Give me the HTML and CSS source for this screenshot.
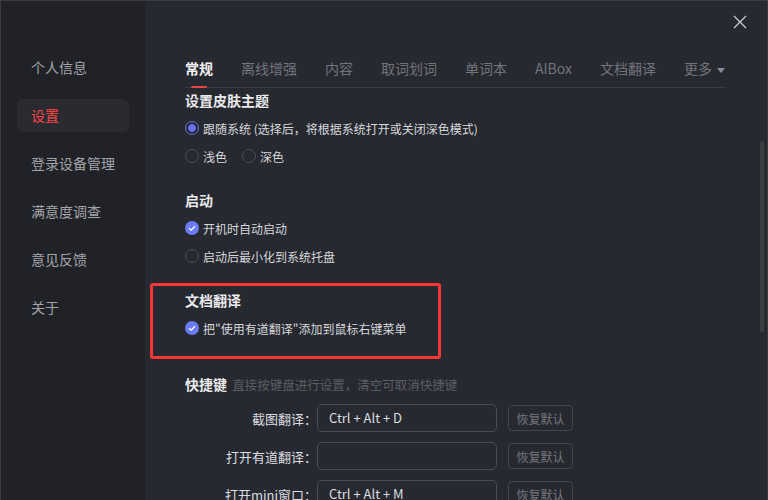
FILE: index.html
```html
<!DOCTYPE html>
<html lang="zh-CN">
<head>
    <meta charset="UTF-8">
    <meta name="viewport" content="width=device-width, initial-scale=1.0">
    <title>设置</title>
    <link rel="stylesheet" href="styles.css">
</head>
<body>
    <div class="window">
        <div class="sidebar">
            <div class="nav-item">个人信息</div>
            <div class="nav-item active">设置</div>
            <div class="nav-item">登录设备管理</div>
            <div class="nav-item">满意度调查</div>
            <div class="nav-item">意见反馈</div>
            <div class="nav-item">关于</div>
        </div>

        <div class="main">
            <button class="close" aria-label="关闭">
                <svg width="14" height="14" viewBox="0 0 14 14"><path d="M1 1L13 13M13 1L1 13" stroke="#c9cbd2" stroke-width="1.3" fill="none"/></svg>
            </button>

            <div class="tabs">
                <span class="tab active">常规</span>
                <span class="tab">离线增强</span>
                <span class="tab">内容</span>
                <span class="tab">取词划词</span>
                <span class="tab">单词本</span>
                <span class="tab">AIBox</span>
                <span class="tab">文档翻译</span>
                <span class="tab more">更多 <i class="caret"></i></span>
            </div>

            <div class="content">
                <div class="section">
                    <div class="section-title">设置皮肤主题</div>
                    <div class="option">
                        <span class="radio checked"></span>跟随系统 (选择后，将根据系统打开或关闭深色模式)
                    </div>
                    <div class="option">
                        <span class="radio"></span>浅色
                        <span class="radio spaced"></span>深色
                    </div>
                </div>

                <div class="section">
                    <div class="section-title">启动</div>
                    <div class="option">
                        <span class="check on"><svg width="14" height="14" viewBox="0 0 14 14"><path d="M4 7.2L6.2 9.2L10 5.2" stroke="#fff" stroke-width="1.3" fill="none"/></svg></span>开机时自动启动
                    </div>
                    <div class="option">
                        <span class="check"></span>启动后最小化到系统托盘
                    </div>
                </div>

                <div class="section marked">
                    <div class="section-title">文档翻译</div>
                    <div class="option">
                        <span class="check on"><svg width="14" height="14" viewBox="0 0 14 14"><path d="M4 7.2L6.2 9.2L10 5.2" stroke="#fff" stroke-width="1.3" fill="none"/></svg></span>把"使用有道翻译"添加到鼠标右键菜单
                    </div>
                </div>

                <div class="section">
                    <div class="section-title">快捷键 <span class="hint">直接按键盘进行设置，清空可取消快捷键</span></div>
                    <div class="hotkey">
                        <label>截图翻译：</label>
                        <div class="key-input">Ctrl + Alt + D</div>
                        <button class="reset">恢复默认</button>
                    </div>
                    <div class="hotkey">
                        <label>打开有道翻译：</label>
                        <div class="key-input"></div>
                        <button class="reset">恢复默认</button>
                    </div>
                    <div class="hotkey">
                        <label>打开mini窗口：</label>
                        <div class="key-input">Ctrl + Alt + M</div>
                        <button class="reset">恢复默认</button>
                    </div>
                </div>
            </div>

            <div class="scrollbar"></div>
        </div>
    </div>
</body>
</html>
```

FILE: styles.css
```css
* {
    box-sizing: border-box;
}
body {
    margin: 0;
    font-family: "Noto Sans CJK SC", "Noto Sans", sans-serif;
    background-color: #272930;
    overflow: hidden;
}
.window {
    width: 768px;
    height: 500px;
    display: flex;
    border: 1px solid #3b3c41;
    border-bottom: none;
    overflow: hidden;
}

/* left nav */
.sidebar {
    width: 144px;
    flex-shrink: 0;
    background-color: #212227;
    padding: 50px 0 0 16px;
}
.nav-item {
    width: 112px;
    height: 33px;
    line-height: 33px;
    padding-left: 14px;
    margin-bottom: 15px;
    font-size: 14px;
    color: #a3a5ab;
    border-radius: 6px;
}
.nav-item.active {
    background-color: #2a2b31;
    color: #ff4747;
}

/* right side */
.main {
    flex: 1;
    position: relative;
    background-color: #272930;
    padding: 0 41px 0 40px;
}
.close {
    position: absolute;
    top: 14px;
    right: 20px;
    padding: 0;
    border: none;
    background: none;
    width: 14px;
    height: 14px;
}
.tabs {
    display: flex;
    gap: 28px;
    margin-top: 57px;
    padding-bottom: 8px;
    border-bottom: 1px solid #3a3c43;
}
.tab {
    position: relative;
    font-size: 14px;
    line-height: 21px;
    color: #72747c;
    white-space: nowrap;
}
.tab.active {
    color: #f2f2f4;
    font-weight: bold;
}
.tab.active::after {
    content: "";
    position: absolute;
    left: 6px;
    bottom: -9px;
    width: 16px;
    height: 2px;
    background-color: #e2463f;
    border-radius: 1px;
}
.caret {
    display: inline-block;
    margin-left: 2px;
    vertical-align: middle;
    border-left: 4px solid transparent;
    border-right: 4px solid transparent;
    border-top: 5px solid #8a8da0;
}

.content {
    padding-top: 2px;
}
.section {
    margin-bottom: 20px;
}
.section.marked {
    position: relative;
    margin-bottom: 32px;
}
.section.marked::before {
    content: "";
    position: absolute;
    left: -35px;
    top: -7px;
    width: 285px;
    height: 70px;
    border: 3px solid #f93535;
    border-radius: 3px;
}
.section-title {
    font-size: 14px;
    line-height: 20px;
    font-weight: bold;
    color: #ebebee;
    margin-bottom: 4px;
}
.hint {
    font-size: 12.5px;
    font-weight: normal;
    color: #5b5e66;
    margin-left: 2px;
}
.option {
    display: flex;
    align-items: center;
    height: 28px;
    font-size: 12px;
    color: #d6d8dc;
    white-space: nowrap;
}
.radio, .check {
    width: 14px;
    height: 14px;
    border-radius: 50%;
    border: 1px solid #4a4c54;
    margin-right: 4px;
    flex-shrink: 0;
}
.radio.spaced {
    margin-left: 15px;
}
.radio.checked {
    border: 1.5px solid #5f72ee;
    background: radial-gradient(circle, #6577f4 3.5px, transparent 4px);
}
.check.on {
    border: none;
    background-color: #6b7bf1;
    display: flex;
}

.hotkey {
    display: flex;
    align-items: center;
    margin-top: 9px;
}
.hotkey + .hotkey {
    margin-top: 10px;
}
.hotkey label {
    width: 132px;
    text-align: right;
    font-size: 13px;
    color: #dcdde0;
    white-space: nowrap;
}
.key-input {
    width: 180px;
    height: 28px;
    line-height: 26px;
    padding-left: 11px;
    border: 1px solid #4a4c53;
    border-radius: 5px;
    font-size: 13px;
    color: #dcdde0;
}
.reset {
    margin-left: 11px;
    width: 65px;
    height: 26px;
    padding: 0;
    background: none;
    border: 1px solid #44464d;
    border-radius: 4px;
    font-family: inherit;
    font-size: 12px;
    color: #74767e;
}

.scrollbar {
    position: absolute;
    right: 3px;
    top: 140px;
    width: 4px;
    height: 192px;
    background-color: #3c3d41;
    border-radius: 2px;
}
```
